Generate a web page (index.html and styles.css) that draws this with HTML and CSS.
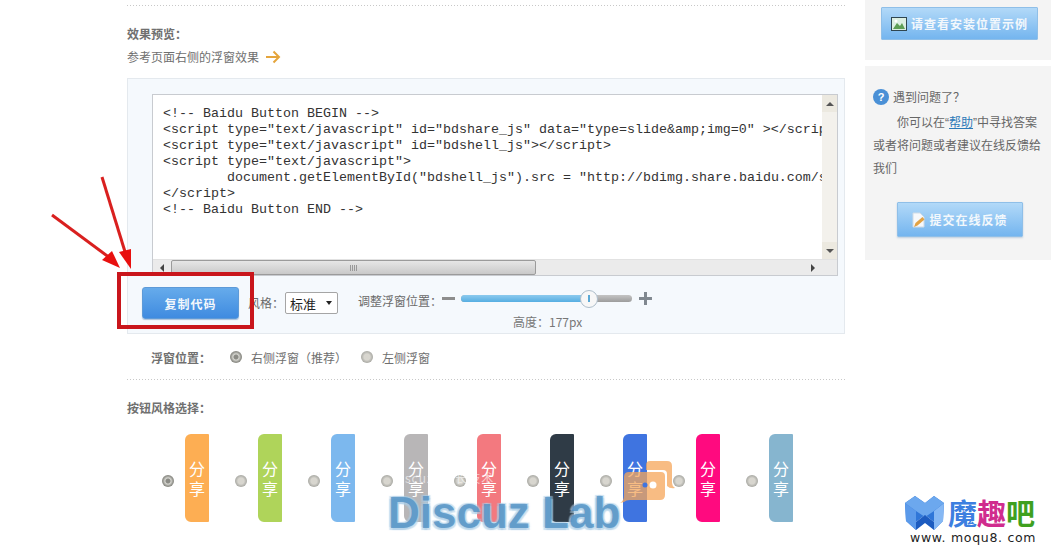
FILE: index.html
```html
<!DOCTYPE html>
<html lang="zh">
<head>
<meta charset="utf-8">
<title>效果预览</title>
<link rel="stylesheet" href="styles.css">
</head>
<body>
<div class="page">
  <main class="main">
    <div class="dots first"></div>
    <h3 class="heading">效果预览<span class="colon">：</span></h3>
    <p class="hint">参考页面右侧的浮窗效果
      <svg class="hint-arrow" width="16" height="14" viewBox="0 0 16 14"><path d="M1 7H14M8.500 1.500L14 7L8.500 12.500" fill="none" stroke="#e5a53c" stroke-width="2"/></svg>
    </p>
    <section class="panel">
      <div class="codebox">
        <div class="code-row">
          <pre class="code">&lt;!-- Baidu Button BEGIN --&gt;
&lt;script type="text/javascript" id="bdshare_js" data="type=slide&amp;amp;img=0" &gt;&lt;/script&gt;
&lt;script type="text/javascript" id="bdshell_js"&gt;&lt;/script&gt;
&lt;script type="text/javascript"&gt;
	document.getElementById("bdshell_js").src = "http://bdimg.share.baidu.com/static/js/shell_v2.js"
&lt;/script&gt;
&lt;!-- Baidu Button END --&gt;</pre>
          <div class="vbar">
            <span class="sb-btn"><i class="tri tri-up"></i></span>
            <span class="vbar-track"></span>
            <span class="sb-btn"><i class="tri tri-down"></i></span>
          </div>
        </div>
        <div class="hbar">
          <span class="hbtn"><i class="tri tri-left"></i></span>
          <span class="hbar-track"><span class="hthumb"><span class="grip"></span></span></span>
          <span class="hbtn"><i class="tri tri-right"></i></span>
          <span class="corner"></span>
        </div>
      </div>
      <div class="controls">
        <button class="copy-btn">复制代码</button>
        <span class="label style-label">风格<span class="colon">：</span></span>
        <span class="select">标准<i class="tri tri-down dark"></i></span>
        <span class="label pos-label">调整浮窗位置<span class="colon">：</span></span>
        <div class="slider-wrap">
          <div class="slider-row">
            <span class="minus"></span>
            <span class="slider"><span class="fill"></span><span class="knob"><span class="knob-mark"></span></span></span>
            <span class="plus"></span>
          </div>
          <div class="height-text">高度<span class="colon">：</span>177px</div>
        </div>
      </div>
    </section>
    <div class="position">
      <strong class="position-title">浮窗位置<span class="colon">：</span></strong>
      <span class="radio on"></span><span class="opt opt-right">右侧浮窗（推荐）</span>
      <span class="radio"></span><span class="opt">左侧浮窗</span>
    </div>
    <div class="dots second"></div>
    <h3 class="heading style-heading">按钮风格选择<span class="colon">：</span></h3>
    <div class="styles">
      <div class="style-item"><span class="radio on"></span><span class="tab c1">分<br>享</span></div>
      <div class="style-item"><span class="radio"></span><span class="tab c2">分<br>享</span></div>
      <div class="style-item"><span class="radio"></span><span class="tab c3">分<br>享</span></div>
      <div class="style-item"><span class="radio"></span><span class="tab c4">分<br>享</span></div>
      <div class="style-item"><span class="radio"></span><span class="tab c5">分<br>享</span></div>
      <div class="style-item"><span class="radio"></span><span class="tab c6">分<br>享</span></div>
      <div class="style-item"><span class="radio"></span><span class="tab c7">分<br>享</span></div>
      <div class="style-item"><span class="radio"></span><span class="tab c8">分<br>享</span></div>
      <div class="style-item"><span class="radio"></span><span class="tab c9">分<br>享</span></div>
    </div>
  </main>
  <aside class="side">
    <div class="card card-top">
      <a class="blue-btn btn-example">
        <svg width="16" height="14" viewBox="0 0 16 14"><rect x="0.500" y="0.500" width="15" height="13" fill="#dcefe2" stroke="#2f4650"/><path d="M2 12L6 6L9 9L11 6L14 12Z" fill="#5e9f55"/><circle cx="5" cy="4" r="1.500" fill="#fff"/></svg>
        请查看安装位置示例
      </a>
    </div>
    <div class="card card-help">
      <div class="help-title"><span class="q">?</span>遇到问题了？</div>
      <p class="help-text">你可以在<span class="quote">“</span><a class="help-link">帮助</a><span class="quote">”</span>中寻找答案或者将问题或者建议在线反馈给我们</p>
      <a class="blue-btn btn-feedback">
        <svg width="13" height="16" viewBox="0 0 13 16"><path d="M1 1H8L12 5V15H1Z" fill="#f6f8fb" stroke="#cfdbe6"/><path d="M2 15L3.500 11L10.500 5L12.500 7.500L5.500 13.500Z" fill="#e2a244"/></svg>
        提交在线反馈
      </a>
    </div>
  </aside>

  <svg class="annot-arrows" width="110" height="130" viewBox="0 0 110 130">
    <path d="M62 7L86 85" stroke="#d9201f" stroke-width="3" fill="none"/>
    <path d="M91 99L79 82L91 79Z" fill="#e8100f"/>
    <path d="M12 45L70 88" stroke="#d9201f" stroke-width="3" fill="none"/>
    <path d="M80 98L62 90L72 81Z" fill="#e8100f"/>
  </svg>
  <div class="annot-box"></div>

  <div class="wm-small">scuz! 站长技术</div>
  <div class="watermark">Discuz Lab</div>
  <svg class="wm-bubble" width="56" height="44" viewBox="0 0 56 44">
    <path d="M30 0H47Q52 0 52 5V22Q52 25 55 27Q50 28 47 25V13Q47 9 43 9H26V4Q26 0 30 0Z" fill="#f5a55a" opacity=".75"/>
    <path d="M9 11H41Q45 11 45 15V34Q45 39 40 39H10Q6 39 4 41L0 42Q4 40 4 34V16Q4 11 9 11Z" fill="#f5a55a" opacity=".75"/>
    <circle cx="33" cy="24" r="3.500" fill="#fff"/><circle cx="25" cy="24" r="2.500" fill="#3f74e0"/>
  </svg>

  <div class="moqu">
    <div class="moqu-top">
      <svg width="39" height="35" viewBox="0 0 39 35">
        <path d="M0 8L10 1L20 8L29 1L39 8L38 26L29 35V27L20 20L11 27V35L1 26Z" fill="#2f76d8"/>
        <path d="M0 8L11 16V35L1 26Z" fill="#5b9aea"/>
        <path d="M29 16L39 8L38 26L29 35Z" fill="#86b8f4"/>
        <path d="M0 8L10 1L20 8L29 1L39 8L29 16L20 22L11 16Z" fill="#6ca8ee"/>
        <path d="M11 27L20 20L29 27V35L20 28L11 35Z" fill="#1d5cc0"/>
      </svg>
      <span class="m1">魔</span><span class="m2">趣</span><span class="m3">吧</span>
    </div>
    <div class="moqu-url">www. moqu8. com</div>
  </div>
</div>
</body>
</html>
```
FILE: styles.css
```css
* { box-sizing: border-box; }
html, body { margin: 0; padding: 0; background: #fff; }
body { font-family: "Noto Sans CJK SC", "Liberation Sans", sans-serif; font-size: 12px; color: #666; overflow: hidden; }
.page { position: relative; width: 1051px; height: 549px; overflow: hidden; display: grid; grid-template-columns: 865px 186px; }
.colon { font-family: "Noto Sans CJK TC", sans-serif; }

.main { padding: 5px 20px 0 127px; min-width: 0; }
.dots { height: 1px; background: repeating-linear-gradient(90deg, #c8c8c8 0 1px, transparent 1px 3px); }
.heading { margin: 20px 0 0; height: 16px; line-height: 16px; font-size: 12px; font-weight: 700; color: #707070; }
.hint { margin: 7px 0 0; height: 16px; line-height: 16px; font-size: 12px; color: #6f6f6f; display: flex; align-items: center; gap: 6px; }

.panel { margin-top: 13px; height: 256px; background: #f5f9fd; border: 1px solid #e4e9ee; padding: 15px 6px 0 24px; }
.codebox { height: 182px; background: #fff; border: 1px solid #c8cbd0; display: flex; flex-direction: column; }
.code-row { flex: 1; min-height: 0; display: flex; }
.code { flex: 1; min-width: 0; margin: 0; padding: 11px 0 0 10px; overflow: hidden; font: 13.33px/16px "Liberation Mono", monospace; color: #333; tab-size: 8; white-space: pre; }
.vbar { width: 15px; background: #f0eee8; display: flex; flex-direction: column; }
.sb-btn { height: 17px; background: #ece9e0; display: flex; align-items: center; justify-content: center; }
.vbar-track { flex: 1; background: #f3f1ec; }
.hbar { height: 16px; background: #ebebeb; border-top: 1px solid #e2e2e2; display: flex; align-items: stretch; }
.hbtn { width: 18px; display: flex; align-items: center; justify-content: center; }
.hbar-track { flex: 1; display: flex; }
.hthumb { width: 365px; background: linear-gradient(#e6e6e6, #c9c9c9); border: 1px solid #9b9b9b; border-radius: 2px; display: flex; align-items: center; justify-content: center; }
.grip { width: 7px; height: 6px; background: repeating-linear-gradient(90deg, #999 0 1px, transparent 1px 2px); }
.corner { width: 15px; }
.tri { display: block; width: 0; height: 0; border: 4px solid transparent; }
.tri-up { border-top: 0; border-bottom-color: #555; }
.tri-down { border-bottom: 0; border-top-color: #555; }
.tri-left { border-left: 0; border-right-color: #444; }
.tri-right { border-right: 0; border-left-color: #444; }

.controls { display: flex; align-items: flex-start; padding-top: 11px; margin-left: -10px; }
.copy-btn { flex: none; width: 97px; height: 32px; margin: 0; padding: 0; border: 1px solid #5d9ad8; border-radius: 3px; background: linear-gradient(#66abeb, #3f8be0); font: 700 12px "Noto Sans CJK SC", sans-serif; color: #f2f7fc; letter-spacing: 1px; box-shadow: 0 1px 1px rgba(60,110,170,.4); }
.label { flex: none; font-size: 12px; color: #6a6a6a; line-height: 16px; white-space: nowrap; }
.style-label { margin: 8px 0 0 9px; width: 37px; }
.select { flex: none; width: 53px; height: 22px; margin: 5px 0 0 0; background: #fff; border: 1px solid #a5a5a5; border-radius: 2px; display: flex; align-items: center; justify-content: space-between; padding: 0 5px 0 4px; font-size: 13px; color: #222; }
.tri.dark { border-width: 4px 3.500px 0; border-top-color: #222; }
.pos-label { margin: 6px 0 0 20px; width: 84px; }
.slider-wrap { flex: none; margin: 3px 0 0 0; width: 210px; }
.slider-row { display: flex; align-items: center; height: 16px; }
.minus { width: 13px; height: 3px; background: #8d8d8d; }
.slider { position: relative; width: 172px; height: 7px; margin-left: 6px; background: linear-gradient(#c4c4c4, #9c9c9c); border-radius: 4px; }
.fill { display: block; width: 128px; height: 7px; background: linear-gradient(#8ccaee, #56aee2); border-radius: 4px 0 0 4px; }
.knob { position: absolute; left: 119px; top: -5px; width: 18px; height: 18px; background: #f7f7f7; border: 1px solid #aebecb; border-radius: 50%; display: flex; align-items: center; justify-content: center; }
.knob-mark { width: 2px; height: 7px; background: #5aa9d6; }
.plus { position: relative; width: 13px; height: 13px; margin-left: 7px; background: linear-gradient(#808890, #808890) center / 13px 3px no-repeat, linear-gradient(#808890, #808890) center / 3px 13px no-repeat; }
.height-text { margin: 8px 0 0 71px; line-height: 16px; font-size: 12px; color: #777; }

.position { display: flex; align-items: center; height: 16px; margin: 15px 0 0 24px; }
.position-title { font-weight: 700; font-size: 12px; color: #707070; width: 79px; }
.radio { flex: none; width: 12px; height: 12px; border-radius: 50%; background: radial-gradient(circle, #d8d6cf 0 3px, #c6c5bf 4px, #a8a8a2 6px); }
.radio.on { background: radial-gradient(circle, #8b8b85 0 2px, #d6d6d0 3px, #969690 5px, #86867f 6px); }
.opt { margin-left: 9px; font-size: 12px; color: #6f6f6f; }
.opt-right { width: 110px; }

.second { margin-top: 14px; }
.style-heading { margin-top: 20px; }
.styles { display: flex; margin: 18px 0 0 35px; }
.style-item { width: 73px; flex: none; display: flex; align-items: center; gap: 11px; }
.style-item .radio { margin-top: 6px; }
.tab { width: 24px; height: 88px; border-radius: 6px 1px 1px 6px; display: flex; align-items: center; justify-content: center; text-align: center; color: #fff; font-size: 16px; line-height: 20px; }
.c1 { background: #fdae53; }
.c2 { background: #afd45a; }
.c3 { background: #7cb8ee; }
.c4 { background: #b8b6b7; }
.c5 { background: #f3797f; }
.c6 { background: #2f3b46; }
.c7 { background: #3f74e0; }
.c8 { background: #ff0a7f; }
.c9 { background: #86b5cf; }

.side { display: flex; flex-direction: column; gap: 6px; }
.card { background: #f4f4f4; }
.card-top { height: 60px; padding: 7px 0 0 16px; }
.card-help { height: 194px; padding: 22px 8px 0 8px; }
.blue-btn { display: flex; align-items: center; justify-content: center; gap: 4px; background: linear-gradient(#b2d9f8, #74b5ef); border: 1px solid #8fbfe8; font-weight: 700; font-size: 12px; letter-spacing: 1px; color: #f3f8fc; border-radius: 1px; }
.btn-example { width: 157px; height: 33px; }
.btn-feedback { width: 126px; height: 35px; margin: 23px 0 0 24px; box-shadow: 0 1px 2px rgba(110,150,190,.4); }
.help-title { display: flex; align-items: center; gap: 4px; line-height: 18px; height: 18px; color: #666; font-size: 12px; }
.q { width: 16px; height: 16px; border-radius: 50%; background: #4a90d6; color: #fff; font: 700 11px/16px "Liberation Sans", sans-serif; text-align: center; }
.help-text { margin: 4px 0 0; height: 69px; line-height: 23px; font-size: 12px; color: #666; text-indent: 24px; }
.quote { font-family: "Liberation Sans", sans-serif; line-height: 1; }
.help-link { color: #2c7ab8; text-decoration: underline; }

.annot-arrows { position: absolute; left: 40px; top: 170px; }
.annot-box { position: absolute; left: 117px; top: 272px; width: 137px; height: 57px; border: 4px solid #c9161c; }

.wm-small { position: absolute; left: 405px; top: 471px; font: 12px/14px "Noto Sans CJK SC", sans-serif; letter-spacing: 1px; color: rgba(255,255,255,.6); white-space: nowrap; }
.watermark { position: absolute; left: 388px; top: 485px; font: 700 44px/56px "Liberation Sans", sans-serif; color: rgba(70,138,192,.72); text-shadow: 1.500px 1.500px 1px rgba(170,205,230,.6), -1.500px 1.500px 1px rgba(170,205,230,.6), 1.500px -1.500px 1px rgba(170,205,230,.6), -1.500px -1.500px 1px rgba(170,205,230,.6); white-space: nowrap; }
.wm-bubble { position: absolute; left: 620px; top: 461px; }

.moqu { position: absolute; left: 905px; top: 494px; width: 140px; }
.moqu-top { display: flex; align-items: center; height: 36px; }
.m1, .m2, .m3 { font: 700 29px/36px "Noto Sans CJK SC", sans-serif; }
.m1 { color: #3d7fe0; margin-left: 4px; }
.m2 { color: #d02c8e; }
.m3 { color: #3fa01f; }
.moqu-url { margin: 1px 0 0 5px; font: 12.500px/14px "DejaVu Sans", sans-serif; letter-spacing: 0.700px; color: #222; white-space: nowrap; }
```
